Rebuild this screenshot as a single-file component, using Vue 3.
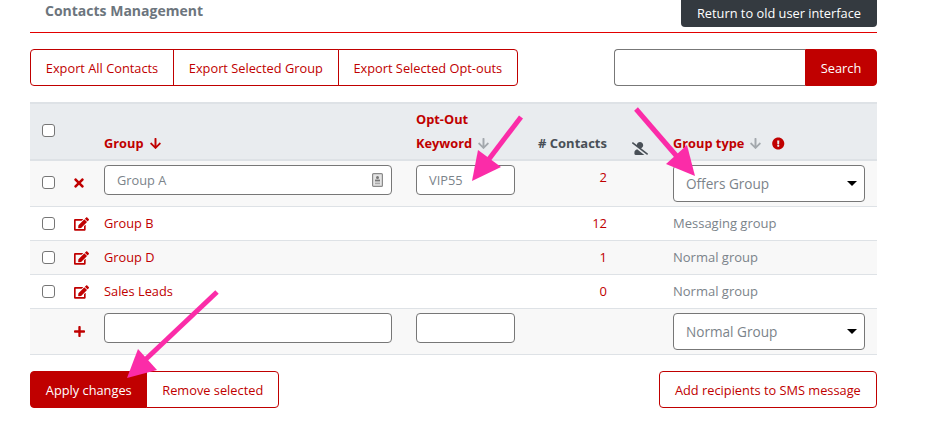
<script setup>
const edit = 'M402.6 83.2l90.2 90.2c3.8 3.8 3.8 10 0 13.8L274.4 405.6l-92.8 10.3c-12.4 1.4-22.9-9.1-21.5-21.5l10.3-92.8L388.8 83.2c3.8-3.8 10-3.8 13.8 0zm162-22.9l-48.8-48.8c-15.2-15.2-39.9-15.2-55.2 0l-35.4 35.4c-3.8 3.8-3.8 10 0 13.8l90.2 90.2c3.8 3.8 10 3.8 13.8 0l35.4-35.4c15.2-15.3 15.2-40 0-55.2zM384 346.2V448H64V128h229.8c3.2 0 6.2-1.3 8.5-3.5l40-40c7.6-7.6 2.2-20.5-8.5-20.5H48C21.5 64 0 85.5 0 112v352c0 26.5 21.5 48 48 48h352c26.5 0 48-21.5 48-48V306.2c0-10.7-12.9-16-20.5-8.5l-40 40c-2.2 2.3-3.5 5.3-3.5 8.5z'
const arrowDown = 'M413.1 222.5l22.2 22.2c9.4 9.4 9.4 24.6 0 33.9L241 473c-9.4 9.4-24.6 9.4-33.9 0L12.7 278.6c-9.4-9.4-9.4-24.6 0-33.9l22.2-22.2c9.5-9.5 25-9.3 34.3.4L184 343.4V56c0-13.3 10.7-24 24-24h32c13.3 0 24 10.7 24 24v287.4l114.8-120.5c9.3-9.8 24.8-10 34.3-.4z'
const rows = [
  { name: 'Group B', count: 12, type: 'Messaging group' },
  { name: 'Group D', count: 1, type: 'Normal group' },
  { name: 'Sales Leads', count: 0, type: 'Normal group' }
]
</script>

<template>
  <div class="page">
    <div class="top">
      <h1 class="title">Contacts Management</h1>
      <button class="dark">Return to old user interface</button>
    </div>

    <div class="toolbar">
      <div class="group">
        <button class="btn">Export All Contacts</button>
        <button class="btn">Export Selected Group</button>
        <button class="btn">Export Selected Opt-outs</button>
      </div>
      <div class="search">
        <input class="search-input" type="text" />
        <button class="btn solid">Search</button>
      </div>
    </div>

    <div class="table">
      <div class="row head">
        <div class="head-check"><span class="check"></span></div>
        <div></div>
        <div class="th red"><span>Group</span><svg class="sort" viewBox="0 0 448 512"><path :d="arrowDown" /></svg></div>
        <div class="th red stack">
          <span>Opt-Out</span>
          <span class="line"><span>Keyword</span><svg class="sort grey" viewBox="0 0 448 512"><path :d="arrowDown" /></svg></span>
        </div>
        <div class="th dim">#&nbsp;Contacts</div>
        <div class="th slash">
          <svg class="slash-icon" viewBox="0 0 640 512"><path d="M633.8 458.1L362.3 248.3C412.1 230.7 448 183.8 448 128 448 57.3 390.7 0 320 0c-67.1 0-121.5 51.8-126.9 117.4L45.5 3.4C38.5-2 28.5-.8 23 6.2L3.4 31.4c-5.4 7-4.2 17 2.8 22.4l588.4 454.7c7 5.4 17 4.2 22.5-2.8l19.6-25.3c5.4-6.8 4.1-16.9-2.9-22.3zM96 422.4V464c0 26.5 21.5 48 48 48h350.2L207.4 290.3C144.2 301.3 96 356 96 422.4z" /></svg>
        </div>
        <div class="th red"><span>Group type</span><svg class="sort grey" viewBox="0 0 448 512"><path :d="arrowDown" /></svg><svg class="info" viewBox="0 0 512 512"><path d="M504 256c0 136.997-111.043 248-248 248S8 392.997 8 256C8 119.083 119.043 8 256 8s248 111.083 248 248zm-248 50c-25.405 0-46 20.595-46 46s20.595 46 46 46 46-20.595 46-46-20.595-46-46-46zm-43.673-165.346l7.418 136c.347 6.364 5.609 11.346 11.982 11.346h48.546c6.373 0 11.635-4.982 11.982-11.346l7.418-136c.375-6.874-5.098-12.654-11.982-12.654h-63.383c-6.884 0-12.356 5.78-11.981 12.654z" /></svg></div>
      </div>

      <div class="row form striped">
        <div class="cell-check"><span class="check"></span></div>
        <div class="cell-icon">
          <svg class="times" viewBox="0 0 352 512"><path d="M242.72 256l100.07-100.07c12.28-12.28 12.28-32.19 0-44.48l-22.24-22.24c-12.28-12.28-32.19-12.28-44.48 0L176 189.28 75.93 89.21c-12.28-12.28-32.19-12.28-44.48 0L9.21 111.45c-12.28 12.28-12.28 32.19 0 44.48L109.28 256 9.21 356.07c-12.28 12.28-12.28 32.19 0 44.48l22.24 22.24c12.28 12.28 32.2 12.28 44.48 0L176 322.72l100.07 100.07c12.28 12.28 32.2 12.28 44.48 0l22.24-22.24c12.28-12.28 12.28-32.19 0-44.48L242.72 256z" /></svg>
        </div>
        <div class="field group-field">
          <span class="input">Group A</span>
          <svg class="fill-icon" viewBox="0 0 11 14">
            <rect x="0.6" y="0.6" width="9.8" height="12.8" rx="1" fill="#e4e4e4" stroke="#8a8a8a" stroke-width="1.2" />
            <circle cx="5.5" cy="4.4" r="1.5" fill="#777" />
            <rect x="3" y="6.6" width="5" height="1.8" fill="#777" />
            <rect x="3" y="9.6" width="5" height="1.6" fill="#aaa" />
          </svg>
        </div>
        <div class="field"><span class="input short">VIP55</span></div>
        <div class="num first">2</div>
        <div></div>
        <div class="field"><span class="select">Offers Group<i class="caret"></i></span></div>
      </div>

      <div v-for="(r, i) in rows" :key="r.name" class="row item" :class="{ striped: i === 1 }">
        <div class="cell-check"><span class="check"></span></div>
        <div class="cell-icon">
          <svg class="edit" viewBox="0 0 576 512"><path :d="edit" /></svg>
        </div>
        <div class="red-text">{{ r.name }}</div>
        <div></div>
        <div class="num">{{ r.count }}</div>
        <div></div>
        <div class="muted">{{ r.type }}</div>
      </div>

      <div class="row form add striped">
        <div></div>
        <div class="cell-icon">
          <svg class="plus" viewBox="0 0 448 512"><path d="M416 208H272V64c0-17.67-14.33-32-32-32h-32c-17.67 0-32 14.33-32 32v144H32c-17.67 0-32 14.33-32 32v32c0 17.67 14.33 32 32 32h144v144c0 17.67 14.33 32 32 32h32c17.67 0 32-14.33 32-32V304h144c17.67 0 32-14.33 32-32v-32c0-17.67-14.33-32-32-32z" /></svg>
        </div>
        <div class="field group-field"><span class="input"></span></div>
        <div class="field"><span class="input short"></span></div>
        <div></div>
        <div></div>
        <div class="field"><span class="select">Normal Group<i class="caret"></i></span></div>
      </div>
    </div>

    <div class="footer">
      <div class="group">
        <button class="btn solid">Apply changes</button>
        <button class="btn">Remove selected</button>
      </div>
      <div class="group">
        <button class="btn wide">Add recipients to SMS message</button>
      </div>
    </div>

    <svg class="arrows" viewBox="0 0 941 425" width="941" height="425">
      <g fill="#fb2ca8" stroke="#fb2ca8">
        <line x1="521" y1="117" x2="486" y2="163" stroke-width="5" />
        <line x1="636" y1="109" x2="680" y2="160" stroke-width="5" />
        <line x1="217" y1="292" x2="145" y2="360" stroke-width="5" />
        <polygon stroke="none" points="472,181 478,150 501,167" />
        <polygon stroke="none" points="695,176 666,164 687,145" />
        <polygon stroke="none" points="127,378 138,349 157,370" />
      </g>
    </svg>
  </div>
</template>

<style>
body { margin: 0; background: #fff; }
</style>

<style scoped>
.page {
  position: relative;
  width: 941px;
  height: 425px;
  padding: 0 64px 0 30px;
  box-sizing: border-box;
  overflow: hidden;
  font-family: "Open Sans", sans-serif;
  font-size: 13px;
  color: #6c757d;
}
.top {
  display: flex;
  justify-content: space-between;
  height: 33px;
  box-sizing: border-box;
  border-bottom: 1px solid #e20000;
}
.title {
  margin: 1px 0 0 15px;
  font-size: 14px;
  line-height: 19px;
  font-weight: 700;
  color: #6c757d;
}
.dark {
  width: 196px;
  height: 27px;
  padding: 0 0 2px;
  border: 0;
  border-radius: 0 0 4px 4px;
  background: #343a40;
  color: #fff;
  font: 12.8px "Open Sans", sans-serif;
}
.toolbar {
  display: flex;
  justify-content: space-between;
  margin-top: 16px;
}
.group, .search { display: flex; height: 37px; }
.btn {
  height: 37px;
  padding: 0 14.8px;
  border: 1px solid #c00000;
  background: #fff;
  color: #c00000;
  font: 12.8px "Open Sans", sans-serif;
  white-space: nowrap;
}
.btn.wide { padding: 0 15.2px; }
.group .btn + .btn { margin-left: -1px; }
.group .btn:first-child { border-radius: 4px 0 0 4px; }
.group .btn:last-child { border-radius: 0 4px 4px 0; }
.group .btn:only-child { border-radius: 4px; }
.btn.solid { background: #c00000; color: #fff; }
.search-input {
  width: 191px;
  height: 37px;
  box-sizing: border-box;
  border: 1px solid #777;
  border-right: 0;
  border-radius: 4px 0 0 4px;
  outline: 0;
}
.search .btn {
  width: 72px;
  padding: 0;
  border-radius: 0 4px 4px 0;
}
.table { margin-top: 16px; }
.row {
  display: grid;
  grid-template-columns: 43px 31px 312px 122px 70px 65px 204px;
  box-sizing: border-box;
  border-bottom: 1px solid #dee2e6;
}
.head {
  height: 59px;
  background: #e9ecef;
  border-top: 2px solid #dee2e6;
  border-bottom: 2px solid #dee2e6;
  font-weight: 700;
  font-size: 12.8px;
}
.head > div { display: flex; align-items: center; align-self: end; height: 18px; margin-bottom: 7px; }
.head > .head-check { padding-left: 12px; align-self: start; margin: 20px 0 0; height: auto; }
.th { line-height: 18px; white-space: nowrap; }
.head > .stack { flex-direction: column; align-items: flex-start; justify-content: flex-end; gap: 6px; height: 42px; }
.line { display: flex; align-items: center; }
.red { color: #c00000; }
.dim { color: #495057; font-size: 13px; }
.sort { width: 11px; height: 13px; margin-left: 6px; fill: #c00000; flex: none; }
.sort.grey { fill: #a3a8ad; }
.info { width: 12.5px; height: 13px; margin-left: 11px; fill: #c00000; flex: none; }
.slash-icon { width: 16px; height: 13px; margin: 10px 0 0 24px; fill: #495057; }
.check {
  display: block;
  width: 11px;
  height: 11px;
  border: 1px solid #767676;
  border-radius: 3px;
  background: #fff;
}
.striped { background: #f8f8f8; }
.item { height: 34px; align-items: center; }
.item .red-text, .item .num, .item .muted { padding-bottom: 1px; }
.form { height: 46px; padding-top: 4px; }
.cell-check { padding-left: 12px; }
.item .cell-check { display: flex; align-items: center; }
.form .cell-check { padding-top: 11px; }
.cell-icon { display: flex; }
.form .cell-icon { padding: 11px 0 0 1px; }
.times { width: 10px; height: 14px; fill: #c00000; }
.edit { width: 15px; height: 14px; fill: #c00000; margin-left: 0.5px; }
.plus { width: 11px; height: 13px; fill: #c00000; margin-top: 1px; }
.field { position: relative; }
.input {
  display: block;
  box-sizing: border-box;
  width: 288px;
  height: 30px;
  padding-left: 12px;
  border: 1px solid #777;
  border-radius: 4px;
  background: #fff;
  font-size: 12.8px;
  line-height: 28px;
  color: #7b838a;
}
.input.short { width: 99px; }
.fill-icon {
  position: absolute;
  top: 8px;
  left: 268px;
  width: 11px;
  height: 14px;
}
.select {
  display: flex;
  align-items: center;
  justify-content: space-between;
  box-sizing: border-box;
  width: 192px;
  height: 37px;
  padding: 0 7px 0 12px;
  border: 1px solid #777;
  border-radius: 4px;
  background: #fff;
  font-size: 13.6px;
  color: #7b838a;
}
.caret {
  width: 0;
  height: 0;
  border-left: 5px solid transparent;
  border-right: 5px solid transparent;
  border-top: 5px solid #000;
}
.red-text { color: #c00000; font-size: 12.8px; }
.muted { color: #7b838a; }
.num { color: #c00000; text-align: right; padding-right: 1px; }
.num.first { padding-top: 3px; }
.footer {
  display: flex;
  justify-content: space-between;
  margin-top: 16px;
}
.arrows {
  position: absolute;
  top: 0;
  left: 0;
  pointer-events: none;
}
</style>
